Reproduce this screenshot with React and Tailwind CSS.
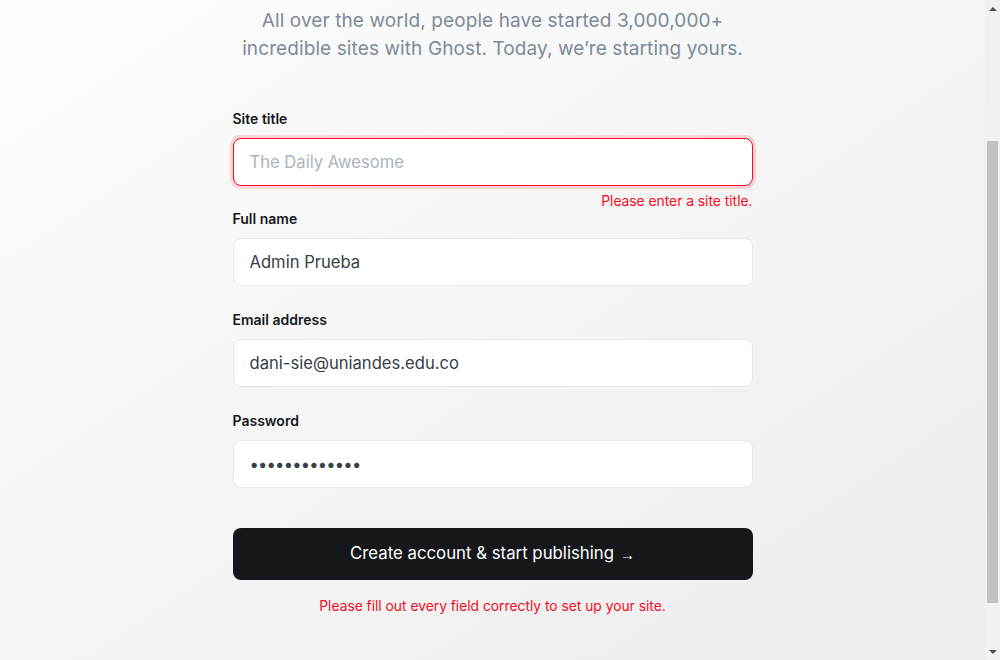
import { useState } from 'react'

function Field({ label, children }) {
  return (
    <div>
      <label className="block text-sm font-semibold text-[#15171a] leading-5 mb-[9px]">{label}</label>
      {children}
    </div>
  )
}

const inputCls =
  'w-full h-12 px-4 bg-white rounded-lg border border-[#e6e8eb] outline-none text-[16.6px] text-[#394047] placeholder:text-[#abb4be]'

export default function App() {
  const [title, setTitle] = useState('')
  const [name, setName] = useState('Admin Prueba')
  const [email, setEmail] = useState('dani-sie@uniandes.edu.co')
  const [password, setPassword] = useState('abcdefghijklm')

  return (
    <div className="flex h-[660px] w-full overflow-hidden" style={{ fontFamily: "Inter, 'Noto Sans', sans-serif" }}>
      <div className="flex-1 bg-linear-to-br from-[#fdfdfd] to-[#ededed]">
        <div className="w-[520px] mx-auto pt-[7px]">
          <p className="text-center text-[19px] leading-[28px] text-[#7c8b9a] tracking-[0.1px]">
            All over the world, people have started 3,000,000+
            <br />
            incredible sites with Ghost. Today, we’re starting yours.
          </p>

          <form className="mt-[46px]" onSubmit={(e) => e.preventDefault()}>
            <Field label="Site title">
              <input
                value={title}
                onChange={(e) => setTitle(e.target.value)}
                placeholder="The Daily Awesome"
                className={inputCls + ' !border-[#f50b23] ring-[3px] ring-[#f50b23]/15'}
              />
              <p className="text-right text-[13.8px] text-[#f50b23] pt-[6px] leading-[18px] h-[23px]">Please enter a site title.</p>
            </Field>

            <Field label="Full name">
              <input value={name} onChange={(e) => setName(e.target.value)} className={inputCls} />
            </Field>

            <div className="mt-[24px]">
              <Field label="Email address">
                <input value={email} onChange={(e) => setEmail(e.target.value)} className={inputCls} />
              </Field>
            </div>

            <div className="mt-[24px]">
              <Field label="Password">
                <input
                  type="password"
                  value={password}
                  onChange={(e) => setPassword(e.target.value)}
                  className={inputCls + ' tracking-[-0.8px]'}
                />
              </Field>
            </div>

            <button
              type="submit"
              className="mt-10 w-full h-[52px] rounded-lg bg-[#15171a] text-white text-[16.8px] flex items-center justify-center"
            >
              Create account &amp; start publishing
              <span className="ml-[6px] text-[15px] mt-[2px]" style={{ fontFamily: "'Liberation Sans', sans-serif" }}>→</span>
            </button>

            <p className="text-center text-[13.8px] text-[#f50b23] mt-[16px] leading-5">
              Please fill out every field correctly to set up your site.
            </p>
          </form>
        </div>
      </div>

      <div className="w-[15px] bg-[#f1f1f1] flex flex-col items-center">
        <div className="h-[17px] flex items-center justify-center">
          <div className="w-0 h-0 border-x-[4px] border-x-transparent border-b-[4px] border-b-[#505050]" />
        </div>
        <div className="h-[124px]" />
        <div className="w-[11px] h-[462px] bg-[#c1c1c1]" />
        <div className="flex-1" />
        <div className="h-[17px] flex items-center justify-center">
          <div className="w-0 h-0 border-x-[4px] border-x-transparent border-t-[4px] border-t-[#505050]" />
        </div>
      </div>
    </div>
  )
}
